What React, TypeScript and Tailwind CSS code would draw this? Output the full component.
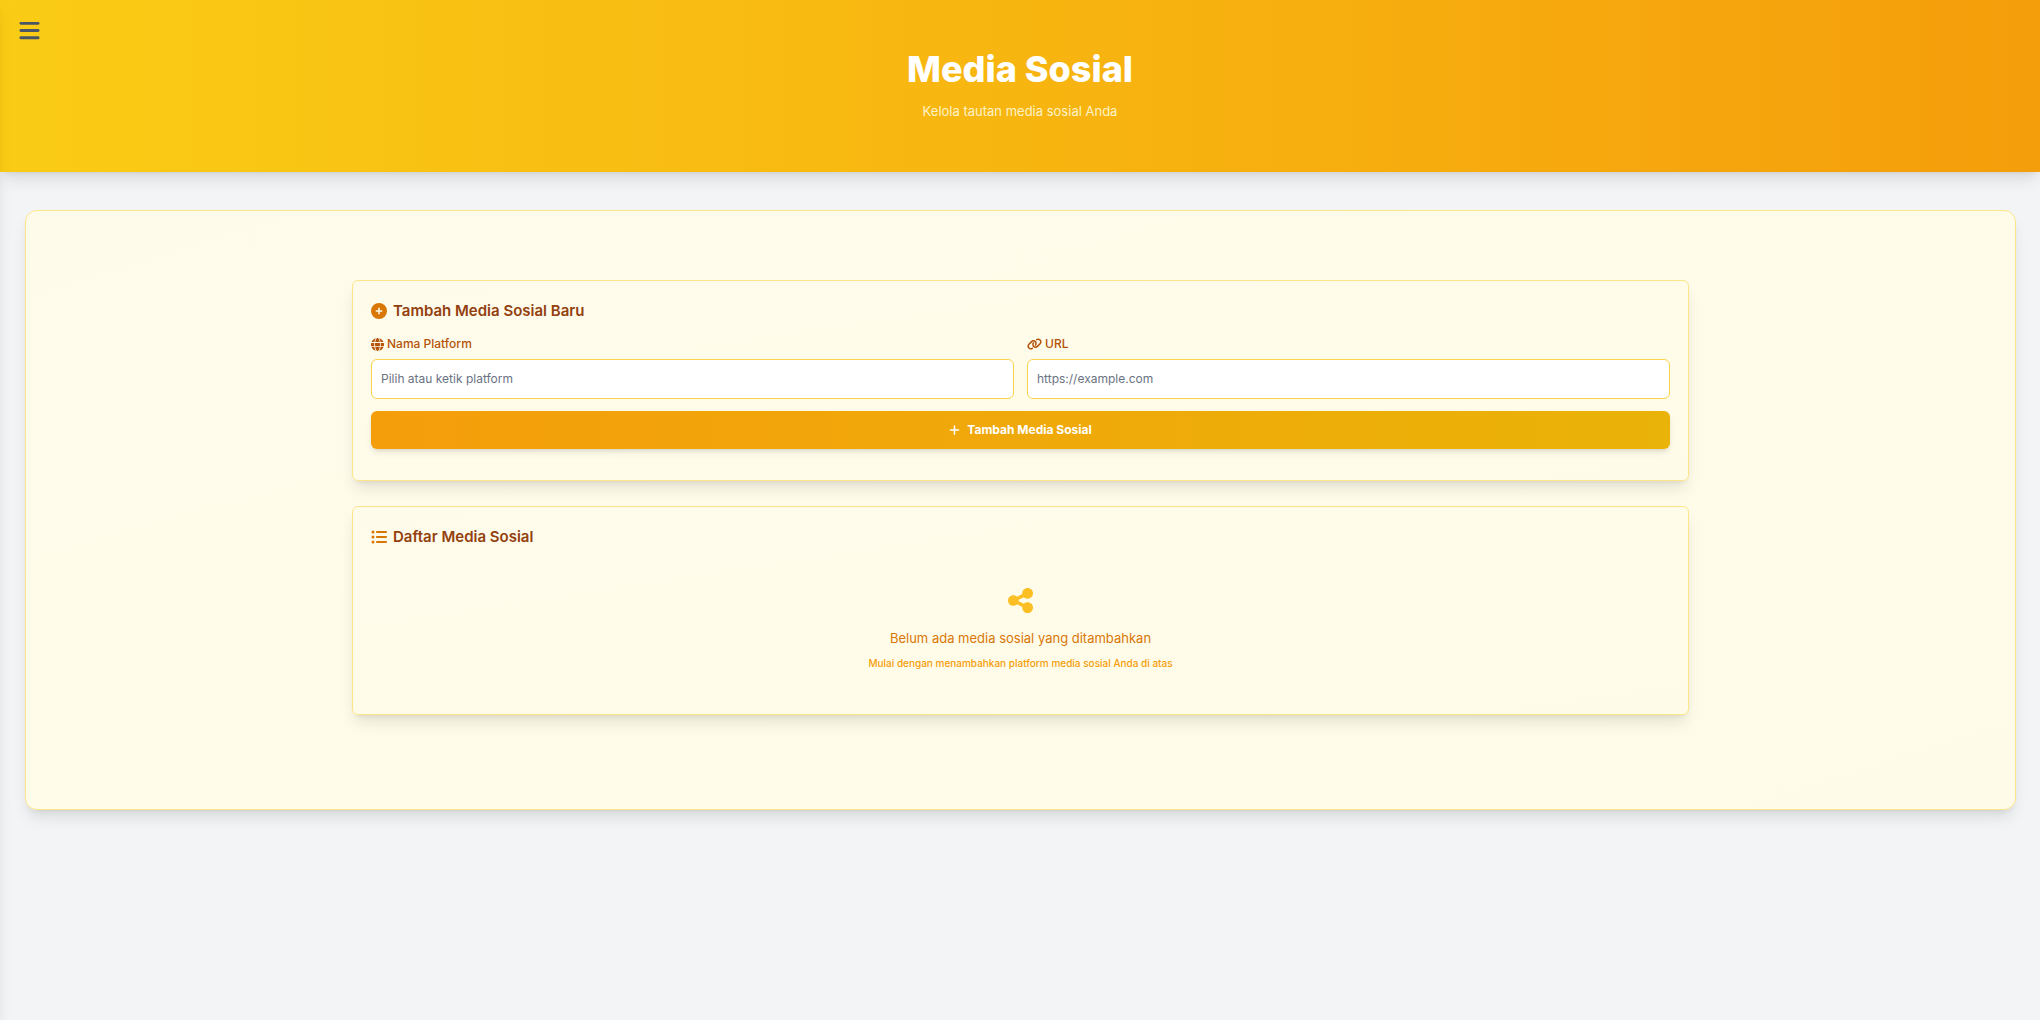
import type { ReactNode } from "react";
import {
  FaBars,
  FaCirclePlus,
  FaGlobe,
  FaLink,
  FaListUl,
  FaPlus,
  FaShareNodes,
} from "react-icons/fa6";

function Header() {
  return (
    <header className="relative bg-linear-to-r/srgb from-[#facc15] to-[#f59e0b] pt-12 pb-[50px] text-center shadow-lg">
      <button
        type="button"
        aria-label="Menu"
        className="absolute top-[19px] left-[19px] text-gray-600"
      >
        <FaBars className="h-[23px] w-[21px]" />
      </button>
      <h1 className="text-[36px] leading-[42px] font-extrabold text-white">Media Sosial</h1>
      <p className="mt-[10px] text-[13px] leading-[22px] text-[#fef3c7]">
        Kelola tautan media sosial Anda
      </p>
    </header>
  );
}

function Card({ icon, title, children }: { icon: ReactNode; title: string; children: ReactNode }) {
  return (
    <section className="rounded-md border border-[#fde68a] bg-linear-to-br/srgb from-[#fffbeb] to-[#fefce8] px-[18px] pt-[18px] shadow-lg">
      <h2 className="flex items-center gap-[6px] text-[15px] leading-6 font-semibold text-[#92400e]">
        <span className="text-[#d97706]">{icon}</span>
        {title}
      </h2>
      {children}
    </section>
  );
}

function Field({
  id,
  label,
  icon,
  placeholder,
}: {
  id: string;
  label: string;
  icon: ReactNode;
  placeholder: string;
}) {
  return (
    <div>
      <label
        htmlFor={id}
        className="flex items-center gap-[3px] text-[12px] leading-5 font-medium text-[#b45309]"
      >
        {icon}
        {label}
      </label>
      <input
        id={id}
        type="text"
        placeholder={placeholder}
        className="mt-[5px] block h-10 w-full rounded-md border border-[#fcd34d] bg-white px-[9px] pb-[2px] text-[12px] text-gray-800 placeholder:text-gray-500"
      />
    </div>
  );
}

export default function App() {
  return (
    <div className="relative min-h-screen overflow-hidden bg-gray-100 font-['Inter',sans-serif]">
      <Header />
      <aside className="absolute inset-y-0 right-full z-10 w-64 bg-white shadow-lg" />
      <main className="pt-[38px] pr-6 pl-[25px]">
        <div className="min-h-[600px] rounded-xl border border-[#fde68a] bg-linear-to-br/srgb from-[#fffbeb] to-[#fefce8] px-6 pt-[69px] pb-[94px] shadow-lg">
          <div className="mx-auto flex max-w-[1337px] flex-col gap-[25px]">
            <Card icon={<FaCirclePlus className="size-4" />} title="Tambah Media Sosial Baru">
              <form className="pt-[11px] pb-[31px]">
                <div className="grid grid-cols-2 gap-[13px]">
                  <Field
                    id="platform"
                    label="Nama Platform"
                    icon={<FaGlobe className="size-[13px]" />}
                    placeholder="Pilih atau ketik platform"
                  />
                  <Field
                    id="url"
                    label="URL"
                    icon={<FaLink className="h-3 w-[15px]" />}
                    placeholder="https://example.com"
                  />
                </div>
                <button
                  type="button"
                  className="mt-3 flex h-[38px] w-full items-center justify-center gap-[7px] rounded-md bg-linear-to-r/srgb from-[#f59e0b] to-[#eab308] text-[12px] font-bold text-white shadow-md"
                >
                  <FaPlus className="h-3 w-[11px]" />
                  Tambah Media Sosial
                </button>
              </form>
            </Card>
            <Card icon={<FaListUl className="size-4" />} title="Daftar Media Sosial">
              <div className="flex flex-col items-center pt-[37px] pb-[41px] text-center">
                <FaShareNodes className="h-[29px] w-[25px] text-[#fbbf24]" />
                <p className="mt-[11px] text-[13px] leading-6 text-[#d97706]">
                  Belum ada media sosial yang ditambahkan
                </p>
                <p className="mt-[3px] text-[10px] leading-5 font-medium text-[#f59e0b]">
                  Mulai dengan menambahkan platform media sosial Anda di atas
                </p>
              </div>
            </Card>
          </div>
        </div>
      </main>
    </div>
  );
}
